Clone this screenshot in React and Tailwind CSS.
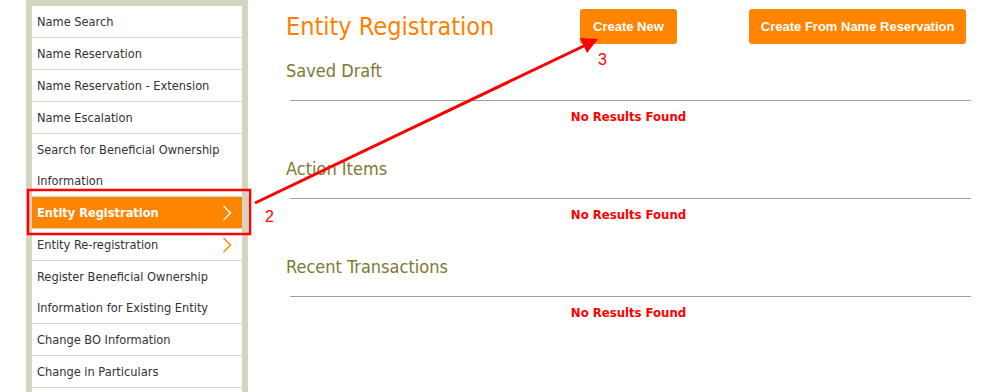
import { Fragment } from 'react'

const MENU = [
  { label: 'Name Search' },
  { label: 'Name Reservation' },
  { label: 'Name Reservation - Extension' },
  { label: 'Name Escalation' },
  { label: 'Search for Beneficial Ownership Information', lines: ['Search for Beneficial Ownership', 'Information'] },
  { label: 'Entity Registration', active: true, arrow: true },
  { label: 'Entity Re-registration', arrow: true },
  { label: 'Register Beneficial Ownership Information for Existing Entity', lines: ['Register Beneficial Ownership', 'Information for Existing Entity'] },
  { label: 'Change BO Information' },
  { label: 'Change in Particulars' },
  { label: '' },
]

const SECTIONS = ['Saved Draft', 'Action Items', 'Recent Transactions']

function Chevron({ className }) {
  return (
    <svg width="10" height="16" viewBox="0 0 10 16" className={className} fill="none">
      <polyline points="1.5,1 8.5,8 1.5,15" stroke="currentColor" strokeWidth="1.4" />
    </svg>
  )
}

function Sidebar() {
  return (
    <aside className="w-[222px] shrink-0 bg-[#d6d3bf] px-[6px] pt-[6px]">
      <ul className="bg-white">
        {MENU.map((item, idx) => (
          <li
            key={idx}
            className={
              item.active
                ? 'flex h-auto min-h-[32px] items-center justify-between border-b border-[#d8d6c4] bg-[#ff8400] pl-[5px] pr-[10px] text-[12.7px] font-bold leading-[31px] text-white'
                : 'flex min-h-[32px] items-center justify-between border-b border-[#d8d6c4] pl-[5px] pr-[10px] text-[12.7px] leading-[31px] text-[#333333]'
            }
          >
            <span>
              {item.lines
                ? item.lines.map((l, i) => (
                    <Fragment key={l}>
                      {i > 0 && <br />}
                      {l}
                    </Fragment>
                  ))
                : item.label}
            </span>
            {item.arrow && (
              <Chevron className={item.active ? 'text-white' : 'text-[#ff8400]'} />
            )}
          </li>
        ))}
      </ul>
    </aside>
  )
}

function Section({ title, first }) {
  return (
    <section className={first ? '' : 'mt-[33px]'}>
      <h2 className="h-[22px] text-[18px] leading-[22px] text-[#7d7a33]">{title}</h2>
      <div className="mt-[18px] ml-[4px] h-px bg-[#a0a0a0]" />
      <p className="mt-[8px] text-center text-[13px] font-bold leading-[16px] text-[#ff0000]">
        No Results Found
      </p>
    </section>
  )
}

function Annotations() {
  return (
    <svg
      className="pointer-events-none absolute left-0 top-0"
      width="995"
      height="392"
      viewBox="0 0 995 392"
    >
      <rect x="28" y="190" width="222" height="44" fill="none" stroke="#ff0000" strokeWidth="2.5" />
      <line x1="255" y1="203" x2="588" y2="44" stroke="#ff0000" strokeWidth="3" />
      <polygon points="598,39 580,38 587,53" fill="#ff0000" />
      <text x="265" y="222" fill="#ff0000" fontSize="16" fontFamily="Liberation Sans, sans-serif">2</text>
      <text x="598" y="65" fill="#ff0000" fontSize="16" fontFamily="Liberation Sans, sans-serif">3</text>
    </svg>
  )
}

export default function App() {
  return (
    <div className="relative h-[392px] w-[995px] overflow-hidden bg-white font-['DejaVu_Sans_Condensed','DejaVu_Sans',sans-serif] font-stretch-condensed">
      <div className="flex pl-[26px]">
        <Sidebar />
        <main className="ml-[38px] w-[685px] pt-[9px]">
          <header className="flex h-[51px] items-start">
            <h1 className="mt-[3px] w-[294px] text-[25px] leading-[30px] text-[#ff8000]">
              Entity Registration
            </h1>
            <button className="h-[35px] rounded-[3px] bg-[#ff8400] px-[13px] font-['Liberation_Sans',sans-serif] text-[13px] font-bold text-white">
              Create New
            </button>
            <button className="ml-[72px] h-[35px] rounded-[3px] bg-[#ff8400] px-[12px] font-['Liberation_Sans',sans-serif] text-[13px] font-bold text-white">
              Create From Name Reservation
            </button>
          </header>
          {SECTIONS.map((s, i) => (
            <Section key={s} title={s} first={i === 0} />
          ))}
        </main>
      </div>
      <Annotations />
    </div>
  )
}
